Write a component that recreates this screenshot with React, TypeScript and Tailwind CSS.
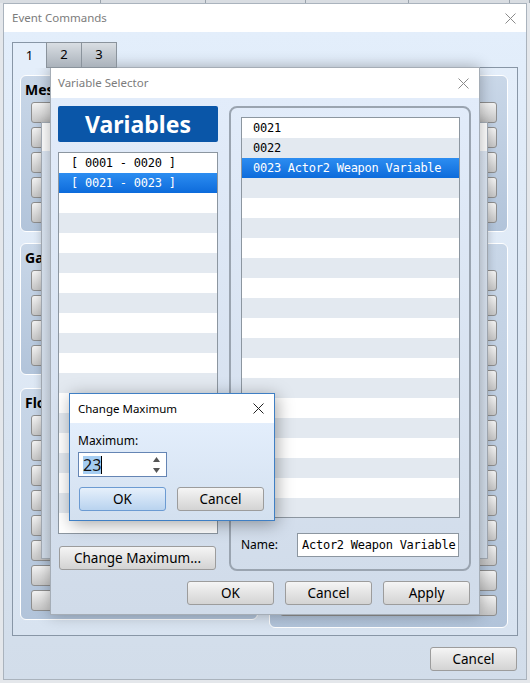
import React from "react";

const ui = "font-['Noto_Sans',sans-serif]";
const mono = "font-['DejaVu_Sans_Mono',monospace] text-[12px] tracking-[-0.25px]";

type Group = { title: string; items: string[]; extra?: boolean };

const leftGroups: Group[] = [
  {
    title: "Message",
    items: ["Show Text...", "Show Choices...", "Input Number...", "Select Item...", "Show Scrolling Text..."],
  },
  {
    title: "Game Progression",
    items: ["Control Switches...", "Control Variables...", "Control Self Switch...", "Control Timer..."],
  },
  {
    title: "Flow Control",
    items: [
      "Conditional Branch...",
      "Loop",
      "Break Loop",
      "Exit Event Processing",
      "Common Event...",
      "Label...",
      "Jump to Label...",
      "Comment...",
    ],
  },
];

const rightGroups: Group[] = [
  {
    title: "Party",
    items: ["Change Gold...", "Change Items...", "Change Weapons...", "Change Armors...", "Change Party Member..."],
  },
  {
    title: "Actor",
    extra: true,
    items: [
      "Change HP...",
      "Change MP...",
      "Change TP...",
      "Change State...",
      "Recover All...",
      "Change EXP...",
      "Change Level...",
      "Change Parameter...",
      "Change Skill...",
      "Change Equipment...",
      "Change Name...",
      "Change Class...",
      "Change Nickname...",
      "Change Profile...",
    ],
  },
];

function CloseIcon({ color }: { color: string }) {
  return (
    <svg width="11" height="11" viewBox="0 0 11 11" className="shrink-0">
      <path d="M0.5 0.5L10.5 10.5M10.5 0.5L0.5 10.5" stroke={color} strokeWidth="1" />
    </svg>
  );
}

function GrayButton({ label, className = "" }: { label: string; className?: string }) {
  return (
    <div
      className={`flex items-center justify-center rounded-[3px] border border-[#9c9c9c] bg-gradient-to-b from-[#f5f5f5] to-[#d3d3d3] text-[13.5px] text-black ${className}`}
    >
      {label}
    </div>
  );
}

function CommandGroup({ group }: { group: Group }) {
  return (
    <div
      className={`rounded-[6px] border border-white bg-gradient-to-b from-[#c9d7e8] to-[#b2c4da] px-[10px] pt-[4px] ${
        group.extra ? "pb-[11px]" : "pb-[8px]"
      }`}
    >
      <div className="-ml-[6px] mb-[3px] h-[19px] whitespace-nowrap text-[14px] font-bold leading-[19px] text-black">
        {group.title}
      </div>
      <div className="flex flex-col gap-[4px]">
        {group.items.map((item) => (
          <div
            key={item}
            className="flex h-[21px] items-center justify-center rounded-[3px] border border-[#8e8e8e] bg-gradient-to-b from-[#f3f3f3] to-[#c6c6c6] text-[12px] text-black"
          >
            {item}
          </div>
        ))}
      </div>
    </div>
  );
}

function EventCommands() {
  return (
    <div className="absolute left-[3px] top-[3px] flex h-[677px] w-[524px] flex-col border border-[#aab3bd]">
      <div className="flex h-[28px] shrink-0 items-center justify-between bg-white pl-[8px] pr-[10px]">
        <span className="text-[11.5px] text-[#7c7c7c]">Event Commands</span>
        <CloseIcon color="#8a8a8a" />
      </div>
      <div className="flex flex-1 flex-col bg-gradient-to-b from-[#e3eefb] to-[#d2ddea] px-[8px] pt-[10px]">
        <div className="relative z-10 -mb-px flex h-[26px]">
          <div className="flex w-[35px] items-center justify-center border border-b-0 border-[#8896a6] bg-[#e4eefa] text-[13px] text-black">
            1
          </div>
          {["2", "3"].map((t) => (
            <div
              key={t}
              className="-ml-px flex w-[36px] items-center justify-center border border-[#8a939c] bg-gradient-to-b from-[#d9dee3] to-[#aab2bb] text-[13px] text-black"
            >
              {t}
            </div>
          ))}
        </div>
        <div className="grid h-[569px] grid-cols-[238px_239px] gap-x-[11px] border border-[#8896a6] bg-gradient-to-b from-[#e4eefa] to-[#d8e3f0] pl-[7px] pt-[7px]">
          <div className="flex flex-col">
            <CommandGroup group={leftGroups[0]} />
            <div className="mt-[11px]">
              <CommandGroup group={leftGroups[1]} />
            </div>
            <div className="mt-[13px]">
              <CommandGroup group={leftGroups[2]} />
            </div>
          </div>
          <div className="flex flex-col gap-[11px]">
            {rightGroups.map((g) => (
              <CommandGroup key={g.title} group={g} />
            ))}
          </div>
        </div>
        <div className="mt-[11px] flex justify-end pr-px">
          <GrayButton label="Cancel" className="h-[24px] w-[87px]" />
        </div>
      </div>
    </div>
  );
}

function ListRows({ count, rows, pad }: { count: number; rows: { text: string; selected?: boolean }[]; pad: string }) {
  return (
    <>
      {Array.from({ length: count }).map((_, i) => {
        const row = rows[i];
        const base = i % 2 === 0 ? "bg-white" : "bg-[#e3e9f0]";
        const sel = row?.selected ? "bg-gradient-to-b from-[#2c8df1] to-[#0c6bdb] text-white" : `${base} text-black`;
        return (
          <div key={i} className={`h-[20px] shrink-0 whitespace-pre leading-[20px] ${pad} ${mono} ${sel}`}>
            {row?.text ?? ""}
          </div>
        );
      })}
    </>
  );
}

function BehindWindow() {
  return (
    <div className="absolute left-[41px] top-[122px] flex h-[437px] w-[447px] flex-col border border-[#a5adb6] shadow-[0_0_8px_rgba(0,0,0,0.15)]">
      <div className="h-[28px] bg-white" />
      <div className="flex-1 bg-gradient-to-b from-[#dfe9f6] to-[#d3deeb]" />
    </div>
  );
}

function VariableSelector() {
  return (
    <div className="absolute left-[50px] top-[67px] flex h-[548px] w-[430px] flex-col border border-[#a5adb6] shadow-[0_0_14px_rgba(0,0,0,0.3)]">
      <div className="flex h-[30px] shrink-0 items-center justify-between bg-white pl-[7px] pr-[10px]">
        <span className="text-[11.5px] text-[#7c7c7c]">Variable Selector</span>
        <CloseIcon color="#8a8a8a" />
      </div>
      <div className="flex flex-1 flex-col bg-gradient-to-b from-[#e2ecfa] to-[#d0dbe9] px-[7px] pt-[8px]">
        <div className="flex gap-[11px]">
          <div className="flex w-[160px] flex-col">
            <div className="flex h-[36px] items-center justify-center rounded-[2px] bg-[#0a56a8] text-[23px] font-bold text-white">
              Variables
            </div>
            <div className="mt-[10px] flex h-[382px] flex-col overflow-hidden border border-[#8c96a0]">
              <ListRows
                count={19}
                pad="pl-[12px]"
                rows={[{ text: "[ 0001 - 0020 ]" }, { text: "[ 0021 - 0023 ]", selected: true }]}
              />
            </div>
            <GrayButton label="Change Maximum..." className="ml-px mt-[12px] h-[24px] w-[157px]" />
          </div>
          <div className="flex h-[465px] w-[242px] flex-col rounded-[8px] border-2 border-[#9aa4b0] pl-[10px] pt-[9px]">
            <div className="flex h-[401px] w-[219px] flex-col overflow-hidden border border-[#8c96a0]">
              <ListRows
                count={20}
                pad="pl-[11px]"
                rows={[{ text: "0021" }, { text: "0022" }, { text: "0023 Actor2 Weapon Variable", selected: true }]}
              />
            </div>
            <div className="mt-[15px] flex h-[24px] items-center">
              <span className="w-[56px] text-[12px] text-black">Name:</span>
              <div className={`flex h-[24px] w-[162px] items-center overflow-hidden whitespace-pre border border-[#8c96a0] bg-white pl-[4px] text-black ${mono}`}>
                Actor2 Weapon Variable
              </div>
            </div>
          </div>
        </div>
        <div className="mt-[10px] flex justify-end gap-[11px] pr-[2px]">
          <GrayButton label="OK" className="h-[24px] w-[87px]" />
          <GrayButton label="Cancel" className="h-[24px] w-[87px]" />
          <GrayButton label="Apply" className="h-[24px] w-[87px]" />
        </div>
      </div>
    </div>
  );
}

function SpinArrows() {
  return (
    <svg width="9" height="18" viewBox="0 0 9 18" className="shrink-0">
      <path d="M4.5 1L8 6H1Z" fill="#555" />
      <path d="M1 12H8L4.5 17Z" fill="#555" />
    </svg>
  );
}

function ChangeMaximum() {
  return (
    <div className="absolute left-[69px] top-[393px] flex h-[128px] w-[206px] flex-col border border-[#3f7fc4] shadow-[2px_3px_16px_rgba(0,0,0,0.35)]">
      <div className="flex h-[29px] shrink-0 items-center justify-between bg-white pl-[8px] pr-[10px]">
        <span className="text-[11.5px] text-black">Change Maximum</span>
        <CloseIcon color="#222" />
      </div>
      <div className="flex flex-1 flex-col bg-gradient-to-b from-[#e3eefc] to-[#d3e0ef] px-[8px] pt-[10px]">
        <div className="h-[16px] text-[12px] leading-[16px] text-black">Maximum:</div>
        <div className="mt-[3px] flex h-[25px] w-[89px] items-center justify-between border border-[#6585b4] bg-white pl-[4px] pr-[5px]">
          <div className="flex items-center">
            <span className="bg-[#a5cdf2] text-[16px] leading-[18px] text-[#111]">23</span>
            <span className="h-[18px] w-px bg-black" />
          </div>
          <SpinArrows />
        </div>
        <div className="ml-px mt-[10px] flex gap-[11px]">
          <div className="flex h-[24px] w-[87px] items-center justify-center rounded-[3px] border border-[#6c9bd2] bg-gradient-to-b from-[#e6f0fb] to-[#b9d3ef] text-[13.5px] text-black">
            OK
          </div>
          <GrayButton label="Cancel" className="h-[24px] w-[87px]" />
        </div>
      </div>
    </div>
  );
}

export default function App() {
  return (
    <div className={`relative h-[683px] w-[530px] overflow-hidden bg-[#e4e7eb] ${ui}`}>
      <div className="flex h-[3px] bg-[#d9dde2]">
        {[101, 105, 100, 103, 101, 20].map((w, i) => (
          <div key={i} style={{ width: w }} className="border-r border-[#9aa3ac]" />
        ))}
      </div>
      <EventCommands />
      <BehindWindow />
      <VariableSelector />
      <ChangeMaximum />
    </div>
  );
}
